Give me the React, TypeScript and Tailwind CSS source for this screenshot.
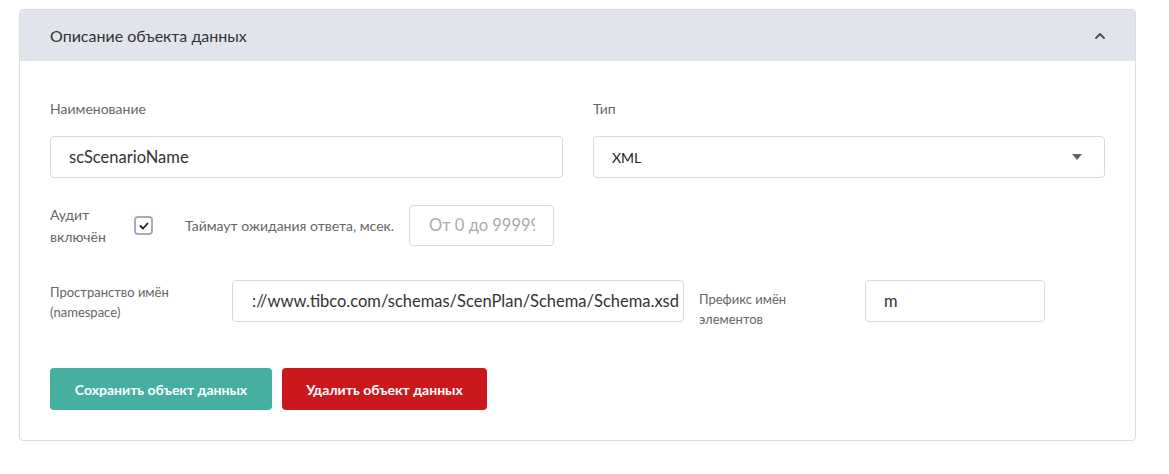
import React from 'react';

const font = { fontFamily: 'Lato, "Liberation Sans", sans-serif' };

const App: React.FC = () => {
  return (
    <div className="w-[1169px] h-[474px] bg-white pt-[9px] pl-[19px]" style={font}>
      <div className="w-[1117px] h-[432px] border border-[#dcdcdc] rounded-[4px] overflow-hidden">
        {/* Header */}
        <div className="h-[51px] bg-[#e1e4ed] flex items-center justify-between pl-[30px] pr-[29px]">
          <h2 className="text-[16px] text-[#333] font-normal">Описание объекта данных</h2>
          <svg width="12" height="8" viewBox="0 0 12 8" fill="none">
            <path d="M2 6l4-4 4 4" stroke="#555" strokeWidth="2" strokeLinecap="round" strokeLinejoin="round" />
          </svg>
        </div>

        <div className="px-[30px] pt-[38px]">
          {/* Row 1 */}
          <div className="flex gap-[30px]">
            <div className="w-[513px]">
              <label className="block text-[14px] text-[#666] leading-[20px]">Наименование</label>
              <div className="mt-[17px] h-[42px] border border-[#d9d9d9] rounded-[4px] flex items-center pl-[18px] text-[16.5px] text-[#333]">
                scScenarioName
              </div>
            </div>
            <div className="w-[512px]">
              <label className="block text-[14px] text-[#666] leading-[20px]">Тип</label>
              <div className="mt-[17px] h-[42px] border border-[#d9d9d9] rounded-[4px] flex items-center justify-between pl-[18px] pr-[22px] text-[14px] text-[#222]">
                <span>XML</span>
                <svg width="10" height="6" viewBox="0 0 10 6">
                  <path d="M0 0h10L5 6z" fill="#666" />
                </svg>
              </div>
            </div>
          </div>

          {/* Row 2 */}
          <div className="flex items-center mt-[27px] h-[41px]">
            <span className="w-[84px] text-[14px] text-[#666] leading-[22px]">
              Аудит
              <br />
              включён
            </span>
            <span className="w-[19px] h-[19px] border-2 border-[#aaa8c6] rounded-[4px] flex items-center justify-center">
              <svg width="10" height="8" viewBox="0 0 10 8" fill="none">
                <path d="M1.5 4l2.5 2.5 4.5-5" stroke="#222" strokeWidth="1.8" strokeLinecap="round" strokeLinejoin="round" />
              </svg>
            </span>
            <span className="ml-[32px] text-[14px] text-[#666]">Таймаут ожидания ответа, мсек.</span>
            <div className="ml-[15px] w-[145px] h-[41px] border border-[#d9d9d9] rounded-[4px] flex items-center pl-[19px] pr-[18px] text-[16.5px] text-[#aaa]">
              <div className="overflow-hidden whitespace-nowrap">От 0 до 999999</div>
            </div>
          </div>

          {/* Row 3 */}
          <div className="flex items-start mt-[34px]">
            <span className="w-[182px] pt-[2px] text-[13px] text-[#666] leading-[20px]">
              Пространство имён
              <br />
              (namespace)
            </span>
            <div className="w-[452px] h-[42px] border border-[#d9d9d9] rounded-[4px] flex items-center pl-[20px] pr-[4px] text-[16.5px] text-[#333]">
              <div className="flex-1 overflow-hidden whitespace-nowrap flex justify-end">
                <span>http://www.tibco.com/schemas/ScenPlan/Schema/Schema.xsd</span>
              </div>
            </div>
            <span className="ml-[15px] w-[166px] pt-[9px] text-[13px] text-[#666] leading-[20px]">
              Префикс имён
              <br />
              элементов
            </span>
            <div className="w-[180px] h-[42px] border border-[#d9d9d9] rounded-[4px] flex items-center pl-[18px] text-[16.5px] text-[#333]">
              m
            </div>
          </div>

          {/* Buttons */}
          <div className="flex gap-[10px] mt-[39px]">
            <button className="w-[222px] h-[42px] rounded-[4px] bg-[#45afa0] text-white text-[14px] font-bold">
              Сохранить объект данных
            </button>
            <button className="w-[205px] h-[42px] rounded-[4px] bg-[#cb181c] text-white text-[14px] font-bold">
              Удалить объект данных
            </button>
          </div>
        </div>
      </div>
    </div>
  );
};

export default App;
